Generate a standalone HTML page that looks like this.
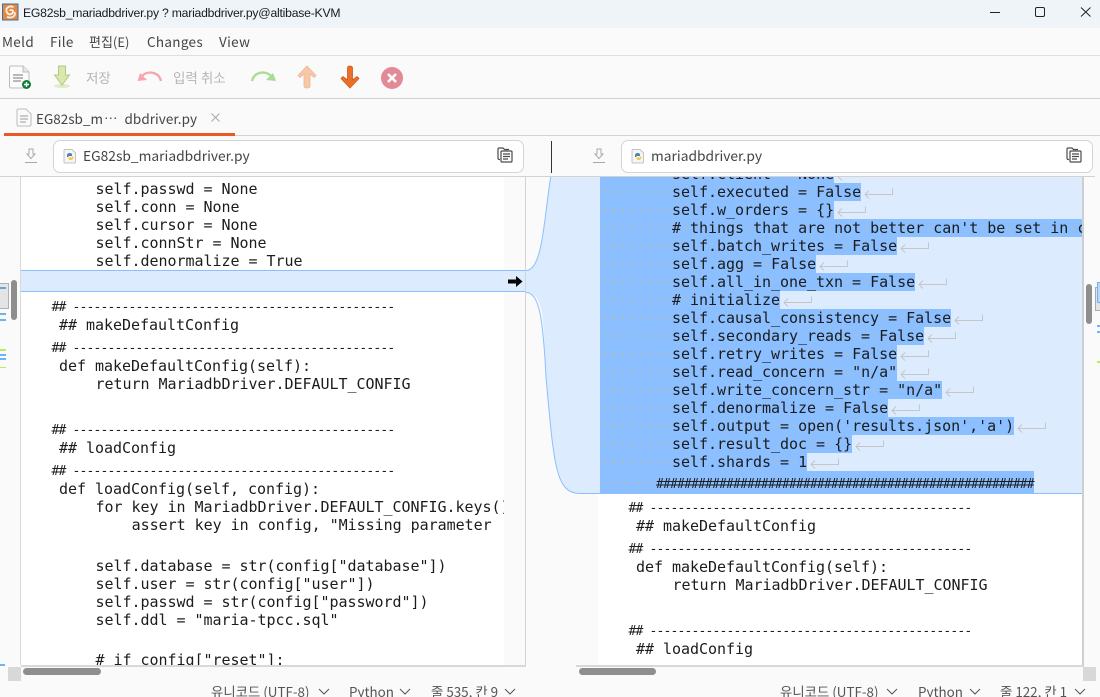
<!DOCTYPE html>
<html><head><meta charset="utf-8"><title>Meld</title>
<style>
html,body{margin:0;padding:0}
body{width:1100px;height:697px;overflow:hidden;background:#fafafa;position:relative;font-family:"Noto Sans CJK KR","Liberation Sans",sans-serif;color:#3d3d3d}
.a{position:absolute}
.t{position:absolute;white-space:pre;line-height:18px}
.h{position:absolute;background:#d2d2d2;height:1px}
.pane{position:absolute;overflow:hidden}
.l{position:absolute;white-space:pre;font:15px/18px "DejaVu Sans Mono",monospace;letter-spacing:-.03px;color:#1c1c1c;height:18px}
.c{position:absolute;white-space:pre;font:13px/18px "DejaVu Sans Mono",monospace;letter-spacing:-.83px;color:#1c1c1c;height:18px;margin-top:2px}
.s{position:absolute;left:22px;white-space:pre;font:15px/18px "DejaVu Sans Mono",monospace;letter-spacing:-.03px;color:#1c1c1c;height:18px;display:flex}
.s b{font-weight:400;background:#8bbfff;display:block;height:18px}
.s i{font-style:normal;color:#b7bcae}
.s svg{width:30px;height:14px;margin:2px 0 0 3px;flex:none;overflow:visible}
.box{position:absolute;top:140px;height:31px;background:#fff;border:1px solid #d4d4d4;border-radius:7px;box-sizing:content-box}
.fn{position:absolute;top:146px;font-size:13.800px;line-height:18px;color:#444;white-space:pre}
</style></head><body>
<svg width="0" height="0" style="position:absolute"><defs>
<g id="r" fill="none" stroke="#c6c6c6" stroke-width="1"><path d="M1 9.500H28.500V3.500M5 5.500L1 9.500L5 13.500"/></g>
<g id="copy" fill="none" stroke="#4a4a4a" stroke-width="1.200"><path d="M3 12.500H2.500Q1 12.500 1 11V2Q1 1 2 1H6L7.500 2.500H12"/><rect x="4" y="4" width="11" height="11" rx="1" fill="#fff"/><path d="M6 7H13M6 9.500H13M6 12H11"/></g>
<g id="py"><path d="M2 1.500H9L12.500 5V14Q12.500 15 11.500 15H2Q1 15 1 14V2.500Q1 1.500 2 1.500Z" fill="#f5f5f5" stroke="#c4c4c4"/><path d="M4 7.500Q4 5 7 5Q9 5 9 7V8H5.500V9H4Z" fill="#4c80b0"/><path d="M10.500 8.500Q10.500 12 7.500 12Q5.500 12 5.500 10V9.500H9V8.500Z" fill="#f4c93f"/></g>
<g id="dl" fill="none" stroke="#a8a8a8" stroke-width="1"><path d="M3 6H5V1H9V6H11L7 10.500ZM1 14.500H13"/></g>
</defs></svg>

<!-- title bar -->
<div class="a" style="left:0;top:0;width:1100px;height:28px;background:#eff4f9"></div>
<svg class="a" style="left:2px;top:3px" width="17" height="18" viewBox="0 0 17 18"><rect x=".5" y="1" width="15.500" height="16" fill="#e8883c" stroke="#3c6ea5"/><path d="M11.500 4C6 2 3 6 5 9.500S11 11 11 8.500C11 7 8.500 6.500 8 8M5 14C11 16 14 12 12.500 9" fill="none" stroke="#f6f0e4" stroke-width="1.800"/></svg>
<div class="t" style="left:23px;top:4px;font:12.200px/18px 'Liberation Sans',sans-serif;letter-spacing:-.22px;color:#1a1a1a">EG82sb_mariadbdriver.py ? mariadbdriver.py@altibase-KVM</div>
<svg class="a" style="left:985px;top:5px" width="115" height="16" fill="none" stroke="#222" stroke-width="1"><path d="M5 7.500H15"/><rect x="50.500" y="2.500" width="9" height="9" rx="1.500"/><path d="M96 2.500L105.500 11.500M105.500 2.500L96 11.500"/></svg>

<!-- menu -->
<div class="t" style="left:2px;top:32px;font-size:13.500px;color:#444;letter-spacing:.35px">Meld</div>
<div class="t" style="left:50px;top:32px;font-size:13.500px;color:#444;letter-spacing:.3px">File</div>
<div class="t" style="left:89px;top:33px;font-size:13px;color:#444">편집(E)</div>
<div class="t" style="left:147px;top:32px;font-size:13.500px;color:#444;letter-spacing:.3px">Changes</div>
<div class="t" style="left:219px;top:32px;font-size:13.500px;color:#444;letter-spacing:.35px">View</div>
<div class="h" style="left:0;top:55px;width:1100px;background:#dedede"></div>

<!-- toolbar -->
<svg class="a" style="left:8px;top:64px" width="26" height="26" viewBox="0 0 26 26"><path d="M3 2H15L21 8V22Q21 24 19 24H3Q1.500 24 1.500 22V3.500Q1.500 2 3 2Z" fill="#fbfbfb" stroke="#bdbdbd"/><path d="M15 2V8H21" fill="#e8e8e8" stroke="#bdbdbd"/><path d="M5 11H15M5 14H15M5 17H13" stroke="#777"/><circle cx="18.500" cy="20.500" r="4.500" fill="#0f7d38"/><path d="M16 20.500H21M18.500 18V23" stroke="#fff" stroke-width="1.400"/></svg>
<svg class="a" style="left:50px;top:64px" width="24" height="26" viewBox="0 0 24 26"><ellipse cx="12" cy="22" rx="8" ry="2" fill="#e0ecc4"/><path d="M8.500 2H15.500V11H19.500L12 21L4.500 11H8.500Z" fill="#dbe8ac" stroke="#b3c68a"/></svg>
<div class="t" style="left:86px;top:68px;font-size:13.500px;color:#b5b5b5">저장</div>
<svg class="a" style="left:135px;top:66px" width="28" height="22" viewBox="0 0 28 22" fill="none"><path d="M26 15C24 6 13 4 7 10" stroke="#f7a6ad" stroke-width="2.300"/><path d="M2.500 15L12 14L5 7Z" fill="#f7a6ad"/></svg>
<div class="t" style="left:173px;top:68px;font-size:13.500px;color:#b5b5b5">입력 취소</div>
<svg class="a" style="left:250px;top:66px" width="28" height="22" viewBox="0 0 28 22" fill="none"><path d="M2 15C4 6 15 4 21 10" stroke="#a6dc94" stroke-width="2.300"/><path d="M26 15L16 14L23 7Z" fill="#a6dc94"/></svg>
<svg class="a" style="left:296px;top:64px" width="22" height="26" viewBox="0 0 22 26"><path d="M11 2L20 11.500L18 13.500L14 10V22Q14 24 11 24Q8 24 8 22V10L4 13.500L2 11.500Z" fill="#f7c8a6" stroke="#edb796" stroke-width=".8"/></svg>
<svg class="a" style="left:339px;top:64px" width="22" height="26" viewBox="0 0 22 26"><path d="M11 24L20 14.500L18 12.500L13.500 16V4Q13.500 2 11 2Q8.500 2 8.500 4V16L4 12.500L2 14.500Z" fill="#ea6f2b" stroke="#d4561c" stroke-width=".8"/></svg>
<svg class="a" style="left:381px;top:67px" width="22" height="22" viewBox="0 0 22 22"><circle cx="11" cy="11" r="11" fill="#e28b97"/><path d="M7 7L15 15M15 7L7 15" stroke="#fff" stroke-width="2.600"/></svg>
<div class="h" style="left:0;top:98px;width:1100px;height:1px;background:#d0d0d0"></div>

<!-- tab -->
<svg class="a" style="left:16px;top:108px" width="16" height="19" viewBox="0 0 16 19"><path d="M2.500 1H10L15 6V16.500Q15 18 13.500 18H2.500Q1 18 1 16.500V2.500Q1 1 2.500 1Z" fill="#fafafa" stroke="#bcbcbc"/><path d="M4 8H12M4 11H12M4 14H10" stroke="#999"/></svg>
<div class="t" style="left:36px;top:109px;font-size:13.500px;color:#444">EG82sb_m</div>
<div class="t" style="left:104px;top:109px;font:13.500px/18px 'Liberation Sans',sans-serif;color:#444">···</div>
<div class="t" style="left:124.500px;top:109px;font-size:13.500px;color:#444;letter-spacing:.05px">dbdriver.py</div>
<svg class="a" style="left:210px;top:112px" width="12" height="12" stroke="#a8a8a8" fill="none"><path d="M1.500 1.500L9.500 9.500M9.500 1.500L1.500 9.500"/></svg>
<div class="a" style="left:4px;top:133px;width:231px;height:3px;background:#e75a24"></div>
<div class="h" style="left:235px;top:135px;width:865px"></div>

<!-- file row -->
<svg class="a" style="left:24px;top:148px" width="14" height="16"><use href="#dl"/></svg>
<div class="box" style="left:53px;width:469px"></div>
<svg class="a" style="left:63px;top:148px" width="14" height="16"><use href="#py"/></svg>
<div class="fn" style="left:83px">EG82sb_mariadbdriver.py</div>
<svg class="a" style="left:497px;top:147px" width="16" height="16"><use href="#copy"/></svg>
<div class="a" style="left:551px;top:141px;width:1px;height:32px;background:#333"></div>
<svg class="a" style="left:592px;top:148px" width="14" height="16"><use href="#dl"/></svg>
<div class="box" style="left:621px;width:470px"></div>
<svg class="a" style="left:631px;top:148px" width="14" height="16"><use href="#py"/></svg>
<div class="fn" style="left:651px">mariadbdriver.py</div>
<svg class="a" style="left:1066px;top:147px" width="16" height="16"><use href="#copy"/></svg>
<div class="h" style="left:0;top:176px;width:1095px"></div>

<!-- left pane -->
<div class="a" style="left:20px;top:177px;width:1px;height:488px;background:#d8d8d8"></div>
<div class="pane" style="left:21px;top:177px;width:504px;height:488px;background:#fafafa">
<div class="a" style="left:0;top:0;width:483px;height:488px;background:#fff"></div>
<div class="a" style="left:0;top:93px;width:504px;height:22px;background:#dcebfe;border-top:1px solid #8bbfff;border-bottom:1px solid #8bbfff;box-sizing:border-box"></div>
<div class="pane" style="left:0;top:0;width:483px;height:488px">
<div class="l" style="left:74.500px;top:3px">self.passwd = None</div>
<div class="l" style="left:74.500px;top:21px">self.conn = None</div>
<div class="l" style="left:74.500px;top:39px">self.cursor = None</div>
<div class="l" style="left:74.500px;top:57px">self.connStr = None</div>
<div class="l" style="left:74.500px;top:75px">self.denormalize = True</div>
<div class="c" style="left:30.500px;top:120px">## ----------------------------------------------</div>
<div class="l" style="left:38px;top:139px">## makeDefaultConfig</div>
<div class="c" style="left:30.500px;top:161px">## ----------------------------------------------</div>
<div class="l" style="left:38px;top:180px">def makeDefaultConfig(self):</div>
<div class="l" style="left:74.500px;top:198px">return MariadbDriver.DEFAULT_CONFIG</div>
<div class="c" style="left:30.500px;top:243px">## ----------------------------------------------</div>
<div class="l" style="left:38px;top:262px">## loadConfig</div>
<div class="c" style="left:30.500px;top:284px">## ----------------------------------------------</div>
<div class="l" style="left:38px;top:303px">def loadConfig(self, config):</div>
<div class="l" style="left:74.500px;top:321px">for key in MariadbDriver.DEFAULT_CONFIG.keys():</div>
<div class="l" style="left:110.600px;top:339px">assert key in config, "Missing parameter '%s'"</div>
<div class="l" style="left:74.500px;top:380px">self.database = str(config["database"])</div>
<div class="l" style="left:74.500px;top:398px">self.user = str(config["user"])</div>
<div class="l" style="left:74.500px;top:416px">self.passwd = str(config["password"])</div>
<div class="l" style="left:74.500px;top:434px">self.ddl = "maria-tpcc.sql"</div>
<div class="l" style="left:74.500px;top:474px"># if config["reset"]:</div>
</div>
<svg class="a" style="left:487px;top:98px" width="15" height="13"><path d="M0 4.500H8V1L14.500 6.500L8 12V8.500H0Z" fill="#000"/></svg>
</div>
<div class="a" style="left:525px;top:177px;width:1px;height:489px;background:#d4d4d4"></div>
<div class="h" style="left:21px;top:665px;width:505px;height:2px;background:#d8d8d8"></div>

<!-- link map -->
<svg class="a" style="left:526px;top:177px" width="54" height="488" viewBox="0 0 54 488">
<path d="M0 93.500C17 93.500 18 40 25 -2H54V316.500C30 316.500 28 290 20 200C17 150 20 115.500 0 115.500Z" fill="#dcebfe"/>
<path d="M0 93.500C17 93.500 18 40 25 -2M0 115.500C13 115.500 17 140 20 200C28 290 30 316.500 54 316.500" fill="none" stroke="#8bbfff"/>
</svg>

<!-- right pane -->
<div class="pane" style="left:578px;top:177px;width:504px;height:488px;background:#fafafa">
<div class="a" style="left:20px;top:0;width:484px;height:488px;background:#fff"></div>
<div class="a" style="left:0;top:0;width:504px;height:316px;background:#dcebfe"></div>
<div class="a" style="left:0;top:316px;width:504px;height:1px;background:#8bbfff"></div>
<div class="s" style="top:-12px"><b><i>········</i>self.client<i>·</i>=<i>·</i>None</b><svg><use href="#r"/></svg></div>
<div class="s" style="top:6px"><b><i>········</i>self.executed<i>·</i>=<i>·</i>False</b><svg><use href="#r"/></svg></div>
<div class="s" style="top:24px"><b><i>········</i>self.w_orders<i>·</i>=<i>·</i>{}</b><svg><use href="#r"/></svg></div>
<div class="s" style="top:42px"><b style="width:482px;overflow:hidden"><i>········</i>#<i>·</i>things<i>·</i>that<i>·</i>are<i>·</i>not<i>·</i>better<i>·</i>can't<i>·</i>be<i>·</i>set<i>·</i>in<i>·</i>c</b></div>
<div class="s" style="top:60px"><b><i>········</i>self.batch_writes<i>·</i>=<i>·</i>False</b><svg><use href="#r"/></svg></div>
<div class="s" style="top:78px"><b><i>········</i>self.agg<i>·</i>=<i>·</i>False</b><svg><use href="#r"/></svg></div>
<div class="s" style="top:96px"><b><i>········</i>self.all_in_one_txn<i>·</i>=<i>·</i>False</b><svg><use href="#r"/></svg></div>
<div class="s" style="top:114px"><b><i>········</i>#<i>·</i>initialize</b><svg><use href="#r"/></svg></div>
<div class="s" style="top:132px"><b><i>········</i>self.causal_consistency<i>·</i>=<i>·</i>False</b><svg><use href="#r"/></svg></div>
<div class="s" style="top:150px"><b><i>········</i>self.secondary_reads<i>·</i>=<i>·</i>False</b><svg><use href="#r"/></svg></div>
<div class="s" style="top:168px"><b><i>········</i>self.retry_writes<i>·</i>=<i>·</i>False</b><svg><use href="#r"/></svg></div>
<div class="s" style="top:186px"><b><i>········</i>self.read_concern<i>·</i>=<i>·</i>"n/a"</b><svg><use href="#r"/></svg></div>
<div class="s" style="top:204px"><b><i>········</i>self.write_concern_str<i>·</i>=<i>·</i>"n/a"</b><svg><use href="#r"/></svg></div>
<div class="s" style="top:222px"><b><i>········</i>self.denormalize<i>·</i>=<i>·</i>False</b><svg><use href="#r"/></svg></div>
<div class="s" style="top:240px"><b><i>········</i>self.output<i>·</i>=<i>·</i>open('results.json','a')</b><svg><use href="#r"/></svg></div>
<div class="s" style="top:258px"><b><i>········</i>self.result_doc<i>·</i>=<i>·</i>{}</b><svg><use href="#r"/></svg></div>
<div class="s" style="top:276px"><b><i>········</i>self.shards<i>·</i>=<i>·</i>1</b><svg><use href="#r"/></svg></div>
<div class="s" style="top:294px;height:22px;font-size:13px;line-height:27px;letter-spacing:-.83px"><b style="height:22px"><i>········</i>######################################################</b></div>
<div class="c" style="left:50.500px;top:321px">## ----------------------------------------------</div>
<div class="l" style="left:58px;top:340px">## makeDefaultConfig</div>
<div class="c" style="left:50.500px;top:362px">## ----------------------------------------------</div>
<div class="l" style="left:58px;top:381px">def makeDefaultConfig(self):</div>
<div class="l" style="left:94.500px;top:399px">return MariadbDriver.DEFAULT_CONFIG</div>
<div class="c" style="left:50.500px;top:444px">## ----------------------------------------------</div>
<div class="l" style="left:58px;top:463px">## loadConfig</div>
</div>
<div class="a" style="left:1082px;top:177px;width:2px;height:489px;background:#cfcfcf"></div>
<div class="h" style="left:576px;top:665px;width:508px;height:2px;background:#d8d8d8"></div>

<!-- overview left -->
<div class="a" style="left:0;top:283px;width:8px;height:24px;background:#e4e4e4;border:1px solid #b0b0b0;border-left:0"></div>
<div class="a" style="left:0;top:287px;width:6px;height:2px;background:#5aa6f2"></div>
<div class="a" style="left:0;top:313px;width:6px;height:2px;background:#6fb2f5"></div>
<div class="a" style="left:0;top:319px;width:6px;height:2px;background:#6fb2f5"></div>
<div class="a" style="left:0;top:349px;width:6px;height:2px;background:#b8ee5a"></div>
<div class="a" style="left:0;top:354px;width:6px;height:2px;background:#6fb2f5"></div>
<div class="a" style="left:0;top:358px;width:6px;height:2px;background:#6fb2f5"></div>
<div class="a" style="left:0;top:367px;width:6px;height:1px;background:#b8ee5a"></div>
<div class="a" style="left:0;top:664px;width:5px;height:2px;background:#6fb2f5"></div>
<div class="a" style="left:11px;top:280px;width:6px;height:40px;background:#8e8e8e;border-radius:3px"></div>
<!-- overview right -->
<div class="a" style="left:1095px;top:287px;width:5px;height:22px;background:#e4e4e4;border:1px solid #aaa;border-right:0"></div>
<div class="a" style="left:1097px;top:282px;width:3px;height:19px;background:#b9d8f8;border:1px solid #6fb2f5;border-right:0"></div>
<div class="a" style="left:1097px;top:325px;width:3px;height:2px;background:#6fb2f5"></div>
<div class="a" style="left:1097px;top:331px;width:3px;height:2px;background:#6fb2f5"></div>
<div class="a" style="left:1097px;top:361px;width:3px;height:2px;background:#b8ee5a"></div>
<div class="a" style="left:1086px;top:284px;width:6px;height:40px;background:#8e8e8e;border-radius:3px"></div>

<!-- h scrollbars -->
<div class="a" style="left:8px;top:667px;width:13px;height:14px;background:#d8d8d8"></div>
<div class="a" style="left:23px;top:668px;width:78px;height:7px;background:#8e8e8e;border-radius:4px"></div>
<div class="a" style="left:579px;top:668px;width:77px;height:7px;background:#8e8e8e;border-radius:4px"></div>
<div class="a" style="left:1083px;top:667px;width:13px;height:14px;background:#d8d8d8"></div>

<!-- status -->
<div class="pane" style="left:0;top:680px;width:1100px;height:17px">
<div class="t" style="left:211px;top:2px;font-size:13.400px;color:#555">유니코드 (UTF-8)</div>
<div class="t" style="left:349px;top:2px;font-size:13.400px;color:#555">Python</div>
<div class="t" style="left:431px;top:2px;font-size:13.400px;color:#555">줄 535, 칸 9</div>
<div class="t" style="left:780px;top:2px;font-size:13.400px;color:#555">유니코드 (UTF-8)</div>
<div class="t" style="left:918px;top:2px;font-size:13.400px;color:#555">Python</div>
<div class="t" style="left:1000px;top:2px;font-size:13.400px;color:#555">줄 122, 칸 1</div>
<svg class="a" style="left:0;top:0" width="1100" height="17" fill="none" stroke="#555"><path d="M319 9L324 14L329 9M400 9L405 14L410 9M505 9L510 14L515 9M887 9L892 14L897 9M970 9L975 14L980 9M1075 9L1080 14L1085 9"/></svg>
</div>
</body></html>
